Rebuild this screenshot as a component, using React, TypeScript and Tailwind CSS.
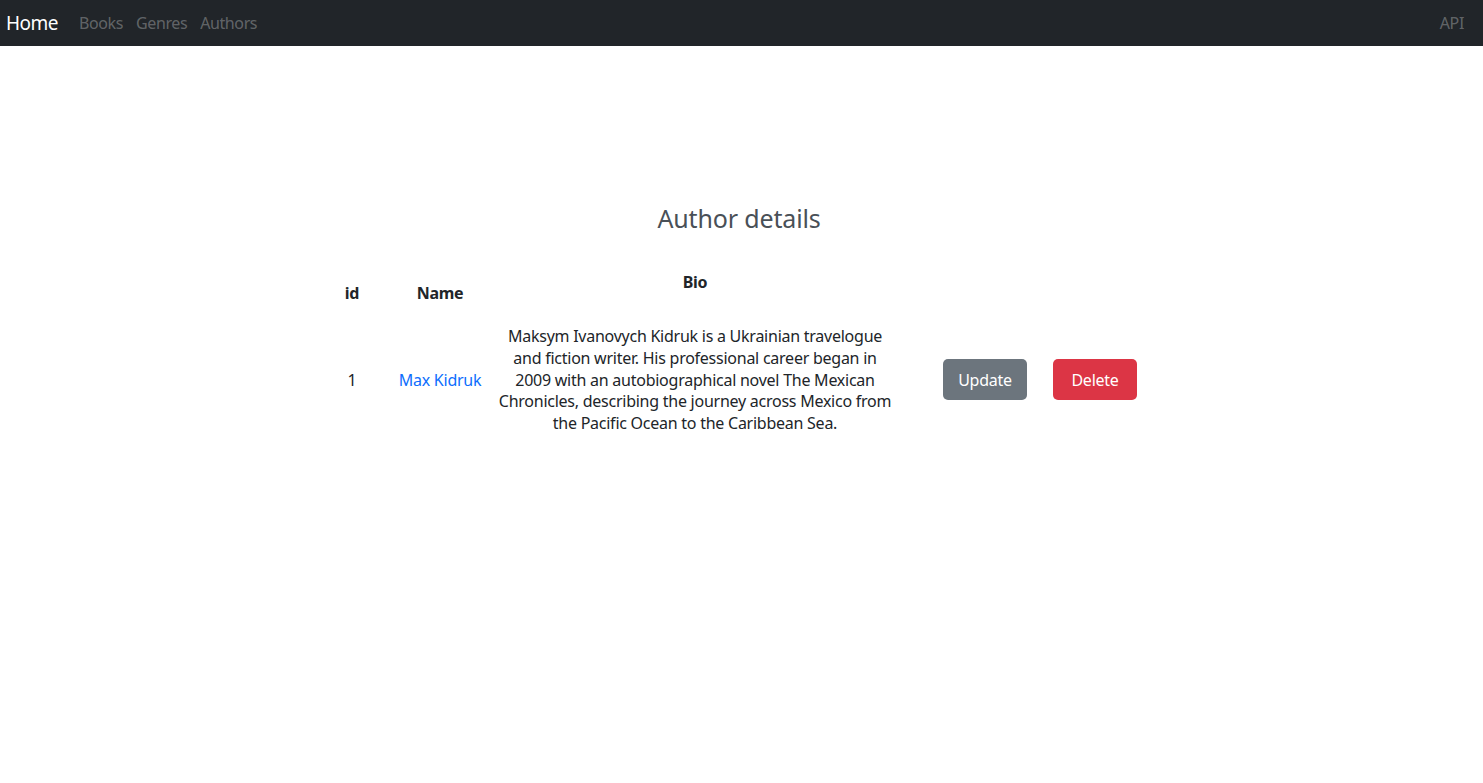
import React from "react";

export default function App() {
  const font = { fontFamily: '"Noto Sans", "Open Sans", sans-serif' };
  return (
    <div className="min-h-[783px] bg-white text-[#212529]" style={font}>
      <nav className="h-[46px] bg-[#212529] flex items-center pl-[6px] pr-[19px]">
        <a className="text-[19px] tracking-[-0.5px] text-white mr-[21px]">Home</a>
        <div className="flex gap-[13px] text-[16px] tracking-[-0.4px] text-[rgba(255,255,255,0.3)]">
          <a>Books</a>
          <a>Genres</a>
          <a>Authors</a>
        </div>
        <a className="ml-auto text-[16px] tracking-[-0.35px] text-[rgba(255,255,255,0.3)]">API</a>
      </nav>
      <h1 className="mt-[157px] text-center text-[25px] tracking-[-0.15px] leading-[31px] text-[#495057] pr-[5px]">Author details</h1>
      <table className="mx-auto mt-[36px] border-collapse text-[16px] tracking-[-0.25px]">
        <thead>
          <tr className="font-bold">
            <th className="w-[78px] pt-[12px] pb-[8px] text-center align-top leading-[22px]">id</th>
            <th className="w-[98px] pt-[12px] pb-[8px] text-center align-top leading-[22px]">Name</th>
            <th className="w-[412px] pt-[1px] pb-[19px] text-center align-top leading-[22px]">Bio</th>
            <th className="w-[139px]"></th>
            <th className="w-[130px]"></th>
          </tr>
        </thead>
        <tbody>
          <tr>
            <td className="text-center align-middle">1</td>
            <td className="text-center align-middle">
              <a className="text-[#0d6efd]">Max Kidruk</a>
            </td>
            <td className="px-[6px] pt-[14px] pb-[13px] text-center leading-[21.75px]">
              Maksym Ivanovych Kidruk is a Ukrainian travelogue and fiction writer. His professional career began in 2009 with an autobiographical novel The Mexican Chronicles, describing the journey across Mexico from the Pacific Ocean to the Caribbean Sea.
            </td>
            <td className="pl-[42px] align-middle">
              <button className="w-[84px] h-[41px] rounded-[5px] bg-[#6c757d] text-white text-[16px]">Update</button>
            </td>
            <td className="pl-[13px] align-middle">
              <button className="w-[84px] h-[41px] rounded-[5px] bg-[#dc3545] text-white text-[16px]">Delete</button>
            </td>
          </tr>
        </tbody>
      </table>
    </div>
  );
}
